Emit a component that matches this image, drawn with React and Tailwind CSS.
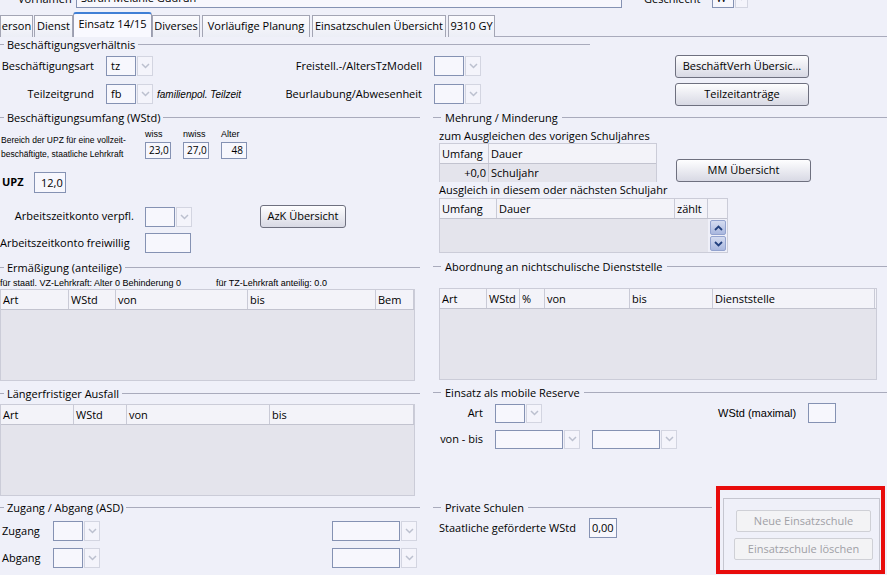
import React from "react";

const LS = "font-['Liberation_Sans',Arial,sans-serif]";

function Arrow({ w = "w-[16px]", h = "h-[20px]" }) {
  return (
    <span className={`ml-[1px] flex ${h} ${w} items-center justify-center border border-[#d3d5e1] bg-[#f4f4fb]`}>
      <svg width="9" height="6" viewBox="0 0 9 6">
        <path d="M1 1l3.5 3.5L8 1" fill="none" stroke="#bcc0cf" strokeWidth="1.5" />
      </svg>
    </span>
  );
}

function Select({ w = "w-[30px]", h = "h-[20px]", value }) {
  return (
    <div className="flex">
      <div className={`${w} ${h} border border-[#8592b3] bg-[#f7f7fd] px-[4px] leading-[18px]`}>{value}</div>
      <Arrow h={h} />
    </div>
  );
}

function Box({ w, h = "h-[20px]", children, cls = "" }) {
  return <div className={`${w} ${h} border border-[#8592b3] bg-[#f7f7fd] ${cls}`}>{children}</div>;
}

function Legend({ title, dash = "w-[4px]", pad = "px-[3px]" }) {
  return (
    <div className="flex h-[14px] items-center">
      <span className={`${dash} h-px bg-[#a9abbc]`} />
      <span className={`${pad} whitespace-nowrap leading-none`}>{title}</span>
      <span className="h-px flex-1 bg-[#a9abbc]" />
    </div>
  );
}

function Btn({ w, h = "h-[23px]", children }) {
  return (
    <div className={`${w} ${h} flex items-center justify-center rounded-[3px] border border-[#6e707f] bg-linear-to-b from-[#fefeff] to-[#d8d9e4]`}>
      {children}
    </div>
  );
}

function OffBtn({ w, children }) {
  return (
    <div className={`${w} flex h-[22px] items-center justify-center rounded-[2px] border border-[#cfd0d6] bg-[#f3f3f5] text-[#9fa0a6]`}>
      {children}
    </div>
  );
}

function Grid({ w, cols, bodyH }) {
  return (
    <div className={`${w} border border-[#cbccd8] bg-[#e4e4ec]`}>
      <div className="flex h-[20px] border-b border-[#c2c3cf] bg-[#f3f3f9]">
        {cols.map(([label, cw]) => (
          <div key={label} className={`${cw} border-r border-[#c9cad6] pl-[2px] leading-[19px]`}>
            {label}
          </div>
        ))}
      </div>
      <div className={bodyH} />
    </div>
  );
}

function Tab({ w, children }) {
  return (
    <div className={`${w} flex h-[22px] items-center justify-center border border-b-0 border-[#a3a5b4] bg-linear-to-b from-[#fbfbfe] to-[#eceef6] whitespace-nowrap`}>
      {children}
    </div>
  );
}

function ScrollBtn({ up, h }) {
  return (
    <div className={`flex ${h} w-[16px] items-center justify-center rounded-[2px] border border-[#93a3cf] bg-linear-to-b from-[#d5dcf1] to-[#a9b7de]`}>
      <svg width="9" height="6" viewBox="0 0 9 6">
        <path d={up ? "M1 5l3.5-3.5L8 5" : "M1 1l3.5 3.5L8 1"} fill="none" stroke="#22407e" strokeWidth="1.8" />
      </svg>
    </div>
  );
}

export default function App() {
  return (
    <div className="h-[575px] w-[887px] overflow-hidden bg-[#eff0f9] font-['Open_Sans',sans-serif] text-[11px] text-black">
      {/* cut-off row above the tabs */}
      <div className="-mt-[12px] flex h-[20px] items-center">
        <div className="w-[76px] pl-[18px] leading-none">Vornamen</div>
        <Box w="w-[546px]" cls="px-[4px] leading-[18px]">Sarah Melanie Gudrun</Box>
        <div className="ml-[22px] leading-none">Geschlecht</div>
        <div className="ml-[12px] flex">
          <Box w="w-[22px]" cls="px-[3px] leading-[18px]">W</Box>
          <Arrow w="w-[13px]" />
        </div>
      </div>

      {/* tabs */}
      <div className="mt-[4px] flex h-[25px] items-end">
        <Tab w="w-[33px]">erson</Tab>
        <div className="w-[1px]" />
        <Tab w="w-[39px]">Dienst</Tab>
        <div className="flex h-[25px] w-[79px] items-start justify-center rounded-t-[3px] border border-b-0 border-t-2 border-[#9a9db0] border-t-[#3f7fd6] bg-[#f9f9ff] pt-[2px] whitespace-nowrap">
          Einsatz 14/15
        </div>
        <Tab w="w-[48px]">Diverses</Tab>
        <div className="w-[2px]" />
        <Tab w="w-[108px]">Vorläufige Planung</Tab>
        <div className="w-[2px]" />
        <Tab w="w-[134px]">Einsatzschulen Übersicht</Tab>
        <div className="w-[2px]" />
        <Tab w="w-[47px]">9310 GY</Tab>
        <div className="h-[25px] flex-1 border-b border-[#a9abbc]" />
      </div>

      {/* Beschäftigungsverhältnis */}
      <div className="w-[590px]">
        <Legend title="Beschäftigungsverhältnis" />
      </div>
      <div className="mt-[4px] flex h-[22px] items-center">
        <div className="flex w-[280px] items-center">
          <div className="w-[94px] text-right">Beschäftigungsart</div>
          <div className="ml-[12px]">
            <Select value="tz" />
          </div>
        </div>
        <div className="w-[142px] text-right">Freistell.-/AltersTzModell</div>
        <div className="ml-[12px]">
          <Select />
        </div>
        <div className="ml-[194px]">
          <Btn w="w-[134px]">BeschäftVerh Übersic...</Btn>
        </div>
      </div>
      <div className="mt-[6px] flex h-[22px] items-center">
        <div className="flex w-[280px] items-center">
          <div className="w-[94px] text-right">Teilzeitgrund</div>
          <div className="ml-[12px]">
            <Select value="fb" />
          </div>
          <div className={`ml-[4px] ${LS} text-[10px] italic`}>familienpol. Teilzeit</div>
        </div>
        <div className="w-[142px] text-right">Beurlaubung/Abwesenheit</div>
        <div className="ml-[12px]">
          <Select />
        </div>
        <div className="ml-[194px]">
          <Btn w="w-[134px]">Teilzeitanträge</Btn>
        </div>
      </div>

      <div className="flex">
        {/* left column */}
        <div className="w-[420px]">
          <div className="mt-[5px]">
            <Legend title="Beschäftigungsumfang (WStd)" />
          </div>
          <div className="mt-[4px] flex h-[32px]">
            <div className={`w-[145px] pl-[1px] pt-[5px] ${LS} text-[8.5px] leading-[14px]`}>
              <div>Bereich der UPZ für eine vollzeit-</div>
              <div>beschäftigte, staatliche Lehrkraft</div>
            </div>
            {[
              ["wiss", "23,0", "text-left pl-[3px]"],
              ["nwiss", "27,0", "text-left pl-[3px]"],
              ["Alter", "48", "text-right pr-[3px]"],
            ].map(([l, v, a]) => (
              <div key={l} className="w-[38px]">
                <div className={`h-[13px] ${LS} text-[9px] leading-[13px]`}>{l}</div>
                <Box w="w-[26px]" h="h-[17px]" cls={`mt-[1px] text-[10px] leading-[15px] ${a}`}>
                  {v}
                </Box>
              </div>
            ))}
          </div>
          <div className="mt-[12px] flex h-[21px] items-center">
            <div className="w-[34px] pl-[2px] font-bold">UPZ</div>
            <Box w="w-[32px]" h="h-[21px]" cls="pl-[6px] leading-[19px]">12,0</Box>
          </div>
          <div className="mt-[12px] flex h-[23px] items-center">
            <div className="w-[134px] text-right">Arbeitszeitkonto verpfl.</div>
            <div className="ml-[11px]">
              <Select />
            </div>
            <div className="ml-[68px]">
              <Btn w="w-[86px]">AzK Übersicht</Btn>
            </div>
          </div>
          <div className="mt-[5px] flex h-[20px] items-center">
            <div className="w-[134px]">Arbeitszeitkonto freiwillig</div>
            <div className="ml-[11px]">
              <Box w="w-[46px]" />
            </div>
          </div>

          <div className="mt-[7px]">
            <Legend title="Ermäßigung (anteilige)" />
          </div>
          <div className={`flex h-[15px] ${LS} text-[9px] leading-[18px]`}>
            <div className="w-[216px]">für staatl. VZ-Lehrkraft: Alter 0 Behinderung 0</div>
            <div>für TZ-Lehrkraft anteilig: 0.0</div>
          </div>
          <Grid
            w="w-[415px]"
            bodyH="h-[70px]"
            cols={[
              ["Art", "w-[68px]"],
              ["WStd", "w-[47px]"],
              ["von", "w-[132px]"],
              ["bis", "w-[128px]"],
              ["Bem", "w-[38px]"],
            ]}
          />

          <div className="mt-[5px]">
            <Legend title="Längerfristiger Ausfall" />
          </div>
          <div className="mt-[4px]">
            <Grid
              w="w-[415px]"
              bodyH="h-[70px]"
              cols={[
                ["Art", "w-[73px]"],
                ["WStd", "w-[53px]"],
                ["von", "w-[143px]"],
                ["bis", "w-[144px]"],
              ]}
            />
          </div>

          <div className="mt-[4px]">
            <Legend title="Zugang / Abgang (ASD)" />
          </div>
          {["Zugang", "Abgang"].map((l) => (
            <div key={l} className="mt-[7px] flex h-[20px] items-center">
              <div className="w-[53px] pl-[2px]">{l}</div>
              <Select />
              <div className="ml-[232px]">
                <Select w="w-[68px]" />
              </div>
            </div>
          ))}
        </div>

        {/* right column */}
        <div className="ml-[13px] w-[454px]">
          <div className="mt-[5px]">
            <Legend title="Mehrung / Minderung" dash="w-[8px]" pad="px-[4px]" />
          </div>
          <div className="mt-[5px] h-[14px] pl-[6px] leading-[14px]">zum Ausgleichen des vorigen Schuljahres</div>
          <div className="flex items-end pl-[6px]">
            <div className="w-[218px] border-x border-t border-[#cbccd8]">
              <div className="flex h-[20px] border-b border-[#c2c3cf] bg-[#f3f3f9]">
                <div className="w-[49px] border-r border-[#c9cad6] pl-[2px] leading-[19px]">Umfang</div>
                <div className="pl-[2px] leading-[19px]">Dauer</div>
              </div>
              <div className="flex h-[18px] bg-[#e4e4ec]">
                <div className="w-[49px] border-r border-[#c9cad6] pr-[2px] text-right leading-[18px]">+0,0</div>
                <div className="pl-[2px] leading-[18px]">Schuljahr</div>
              </div>
            </div>
            <div className="ml-[19px]">
              <Btn w="w-[135px]">MM Übersicht</Btn>
            </div>
          </div>
          <div className="mt-[1px] h-[14px] pl-[6px] leading-[14px]">Ausgleich in diesem oder nächsten Schuljahr</div>
          <div className="ml-[6px] mt-[1px] w-[289px] border border-[#cbccd8]">
            <div className="flex h-[20px] border-b border-[#c2c3cf] bg-[#f3f3f9]">
              <div className="w-[57px] border-r border-[#c9cad6] pl-[2px] leading-[19px]">Umfang</div>
              <div className="w-[178px] border-r border-[#c9cad6] pl-[2px] leading-[19px]">Dauer</div>
              <div className="w-[33px] border-r border-[#c9cad6] pl-[2px] leading-[19px]">zählt</div>
            </div>
            <div className="flex h-[33px]">
              <div className="w-[268px] bg-[#e4e4ec]" />
              <div className="ml-[2px] flex flex-col gap-[1px] pt-[1px]">
                <ScrollBtn up h="h-[15px]" />
                <ScrollBtn h="h-[15px]" />
              </div>
            </div>
          </div>

          <div className="mt-[6px]">
            <Legend title="Abordnung an nichtschulische Dienststelle" dash="w-[8px]" pad="px-[4px]" />
          </div>
          <div className="ml-[6px] mt-[15px]">
            <Grid
              w="w-[438px]"
              bodyH="h-[70px]"
              cols={[
                ["Art", "w-[47px]"],
                ["WStd", "w-[33px]"],
                ["%", "w-[25px]"],
                ["von", "w-[85px]"],
                ["bis", "w-[83px]"],
                ["Dienststelle", "w-[162px]"],
              ]}
            />
          </div>

          <div className="mt-[5px]">
            <Legend title="Einsatz als mobile Reserve" dash="w-[8px]" pad="px-[4px]" />
          </div>
          <div className="mt-[4px] flex h-[20px] items-center">
            <div className="w-[50px] text-right">Art</div>
            <div className="ml-[12px]">
              <Select h="h-[19px]" />
            </div>
            <div className={`ml-[176px] ${LS} text-[11px]`}>WStd (maximal)</div>
            <div className="ml-[12px]">
              <Box w="w-[28px]" />
            </div>
          </div>
          <div className="mt-[6px] flex h-[20px] items-center">
            <div className="w-[50px] text-right">von - bis</div>
            <div className="ml-[12px]">
              <Select w="w-[68px]" h="h-[19px]" />
            </div>
            <div className="ml-[12px]">
              <Select w="w-[68px]" h="h-[19px]" />
            </div>
          </div>

          <div className="mt-[37px] flex">
            <div className="w-[283px]">
              <div className="mt-[14px] w-[279px]">
                <Legend title="Private Schulen" dash="w-[8px]" pad="px-[4px]" />
              </div>
              <div className="mt-[4px] flex h-[20px] items-center">
                <div className="ml-[6px]">Staatliche geförderte WStd</div>
                <div className="ml-[13px]">
                  <Box w="w-[28px]" cls="pl-[2px] leading-[18px]">0,00</Box>
                </div>
              </div>
            </div>
            <div className="h-[88px] w-[169px] border-4 border-[#e80c0c]">
              <div className="ml-[3px] mt-[8px] h-[72px] w-[157px] border-x border-t border-[#c5c6d0] pl-[10px] pt-[11px]">
                <div className="ml-[2px]">
                  <OffBtn w="w-[135px]">Neue Einsatzschule</OffBtn>
                </div>
                <div className="mt-[6px]">
                  <OffBtn w="w-[139px]">Einsatzschule löschen</OffBtn>
                </div>
              </div>
            </div>
          </div>
        </div>
      </div>
    </div>
  );
}
